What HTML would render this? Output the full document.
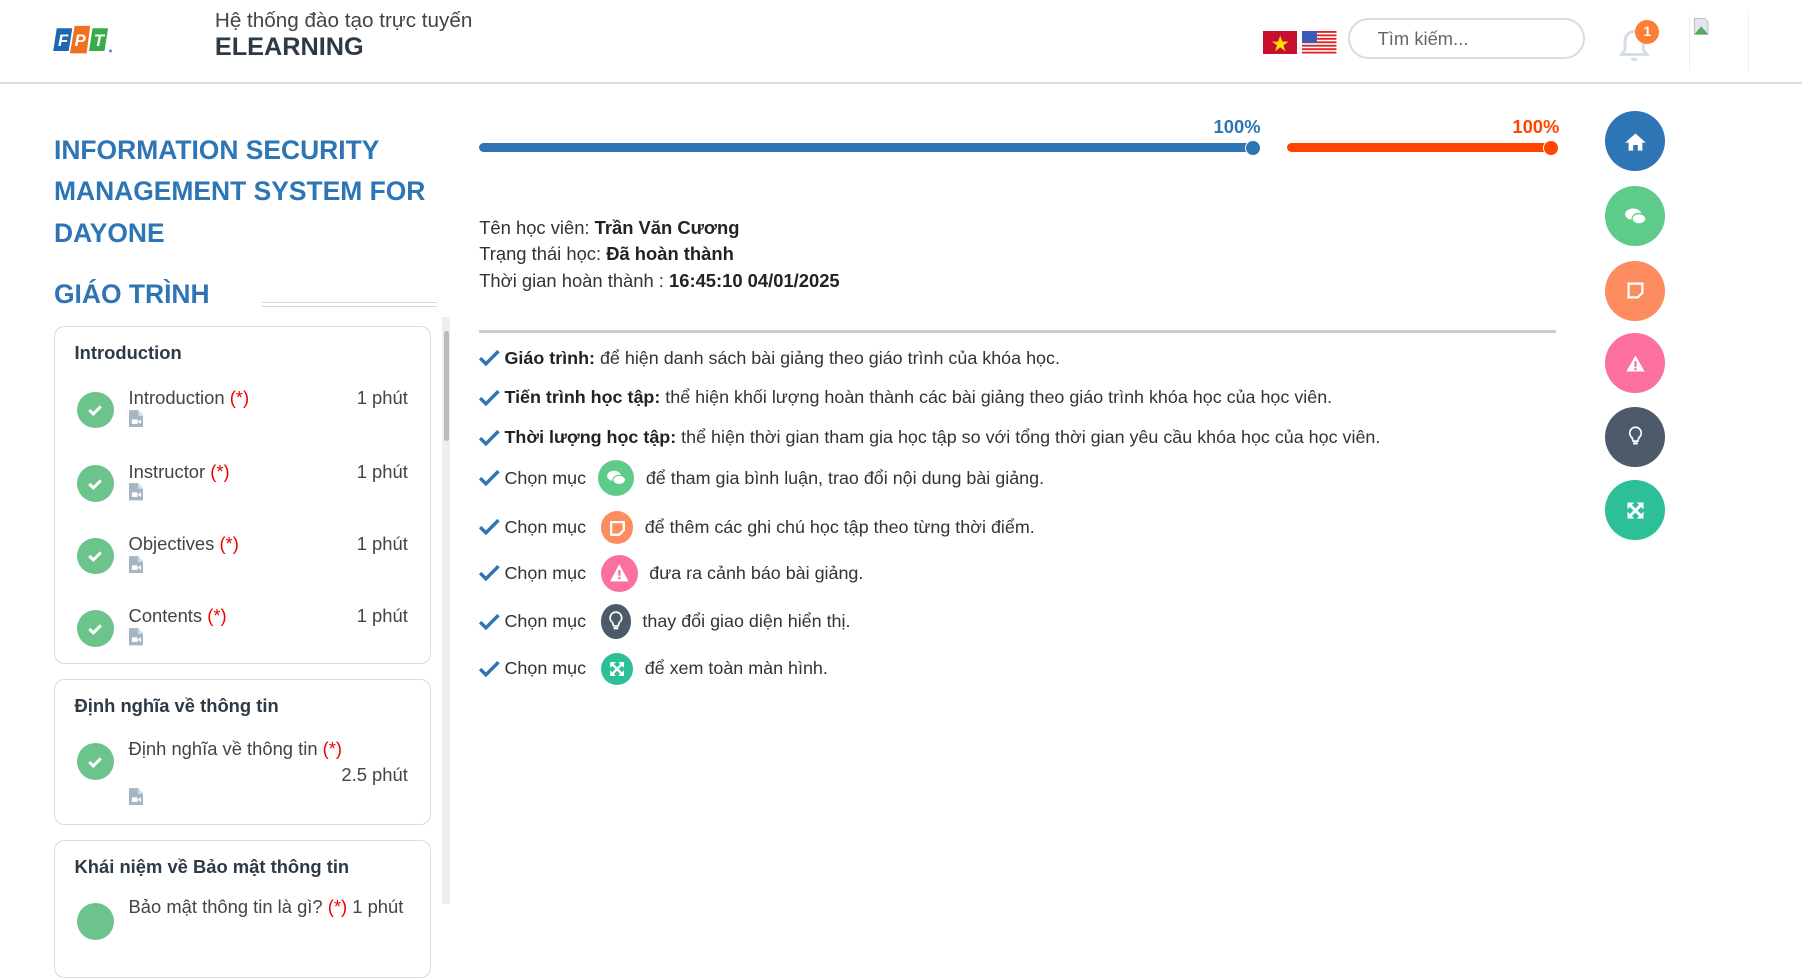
<!DOCTYPE html>
<html><head><meta charset="utf-8">
<style>
html{zoom:1.1492}
*{box-sizing:border-box;margin:0;padding:0}
body{width:1568px;height:787px;overflow:hidden;background:#fff;font-family:"Liberation Sans","DejaVu Sans",sans-serif;color:#333;position:relative}
.abs{position:absolute}
.hdr{left:0;top:0;width:1568px;height:73px;border-bottom:2px solid #d3dde5;background:#fff}
.t1{left:187px;top:8px;font-size:18px;color:#444}
.t2{left:187px;top:29px;font-size:22px;font-weight:bold;color:#2d3a46}
.search{left:1173px;top:16px;width:206px;height:35px;border:2px solid #d3dde5;border-radius:18px;font-size:16px;color:#666;padding:7px 0 0 24px}
.badge{left:1423px;top:17px;width:21px;height:21px;border-radius:50%;background:#fd7e34;color:#fff;font-size:12px;font-weight:bold;text-align:center;line-height:21px}
.title{left:47px;top:113px;font-size:23px;line-height:36px;font-weight:bold;color:#2e75b6;width:340px}
.gt{left:47px;top:243px;font-size:23px;font-weight:bold;color:#2e75b6}
.card{left:47px;width:328px;border:1px solid #d3dde5;border-radius:9px;background:#fff}
.ch{position:absolute;left:17px;top:13px;font-size:16px;font-weight:bold;color:#2d3a46}
.it{position:absolute;left:0;width:328px;height:50px}
.ck{position:absolute;left:19px;top:4px;width:32px;height:32px;border-radius:50%;background:#6cc48c}
.ck svg{position:absolute;left:9px;top:10px}
.nm{position:absolute;left:64px;top:0;font-size:16px;color:#444}
.nm b{color:#e00;font-weight:normal}
.tm{position:absolute;right:21px;top:0;font-size:16px;color:#444}
.fi{position:absolute;left:64px;top:19px}
.sb{left:385px;top:276px;width:7px;height:511px;background:#eee}
.th{left:386px;top:288px;width:5px;height:96px;background:#bbb;border-radius:3px}
.info{left:417px;top:187px;font-size:16px;line-height:23px;color:#333}
.info b{color:#222}
.li{left:417px;font-size:15.6px;color:#333;height:30px;display:flex;align-items:center;white-space:nowrap}
.li b{color:#222}
.li .c{display:inline-block;width:28px;height:28px;border-radius:50%;margin:0 10px;position:relative}
.rb{left:1397px;width:52px;height:52px;border-radius:50%}
.rb svg{position:absolute;left:16px;top:16px}
</style></head><body>
<div class="abs hdr"></div>
<svg class="abs" style="left:45px;top:20px" width="54" height="30" viewBox="0 0 52 28">
<path d="M4 4h13l-3 19H1z" fill="#1d68b4"/><path d="M19 2h13l-3 23H15z" fill="#f26f21"/><path d="M34 4h13l-3 19H31z" fill="#3aab49"/>
<text x="5" y="19" font-size="14" font-weight="bold" fill="#fff" font-style="italic" font-family="Liberation Sans">F</text>
<text x="19" y="19" font-size="14" font-weight="bold" fill="#fff" font-style="italic" font-family="Liberation Sans">P</text>
<text x="35" y="19" font-size="14" font-weight="bold" fill="#fff" font-style="italic" font-family="Liberation Sans">T</text>
<circle cx="49" cy="23" r="1.3" fill="#6b8fc7"/></svg>
<div class="abs t1">Hệ thống đào tạo trực tuyến</div>
<div class="abs t2">ELEARNING</div>
<svg class="abs" style="left:1099px;top:27px" width="30" height="20"><rect width="30" height="20" fill="#c8102e"/><path d="M15 4l1.8 5.2h5.4l-4.4 3.2 1.7 5.2-4.5-3.3-4.5 3.3 1.7-5.2-4.4-3.2h5.4z" fill="#ffde00"/></svg>
<svg class="abs" style="left:1133px;top:27px" width="30" height="20"><rect width="30" height="20" fill="#fff"/><g fill="#d22"><rect y="0" width="30" height="1.6"/><rect y="3" width="30" height="1.6"/><rect y="6" width="30" height="1.6"/><rect y="9" width="30" height="1.6"/><rect y="12" width="30" height="1.6"/><rect y="15" width="30" height="1.6"/><rect y="18" width="30" height="1.6"/></g><rect width="13" height="10.5" fill="#3c5bb5"/></svg>
<div class="abs search">Tìm kiếm...</div>
<svg class="abs" style="left:1407px;top:24px" width="30" height="32" viewBox="0 0 30 32"><path d="M15 3c-5 0-8 4-8 9v7l-3 4h22l-3-4v-7c0-5-3-9-8-9z" fill="none" stroke="#d3dde5" stroke-width="2.5"/><path d="M12 26a3 3 0 006 0z" fill="#d3dde5"/></svg>
<div class="abs badge">1</div>
<div class="abs" style="left:1470px;top:12px;width:52px;height:50px;border:1px solid #eee;border-top:none;border-bottom:none"></div>
<svg class="abs" style="left:1472px;top:14px" width="16" height="18"><path d="M2 2h9l3 3v11H2z" fill="#dfe6ee" stroke="#aab" stroke-width=".6"/><path d="M2 16l6-7 6 7z" fill="#5a5"/></svg>

<div class="abs title">INFORMATION SECURITY MANAGEMENT SYSTEM FOR DAYONE</div>
<div class="abs gt">GIÁO TRÌNH</div>
<div class="abs" style="left:228px;top:263px;width:152px;height:4px;border-top:1px solid #cfd8e0;border-bottom:1px solid #cfd8e0"></div>

<div class="abs card" style="top:284px;height:294px">
<div class="ch">Introduction</div>
<div class="it" style="top:52px"><div class="ck"><svg width="14" height="12"><path d="M2 6l3.5 3.5L12 3" stroke="#fff" stroke-width="2.6" fill="none"/></svg></div><div class="nm">Introduction <b>(*)</b></div><div class="tm">1 phút</div><svg class="fi" width="13" height="16"><path d="M0 1h8l5 5v10H0z" fill="#a6b4c4"/><path d="M8 1v5h5z" fill="#d6dee6"/><rect x="2.5" y="9" width="5" height="4" fill="#fff"/><path d="M7.5 11l3-2v4z" fill="#fff"/></svg></div>
<div class="it" style="top:116px"><div class="ck"><svg width="14" height="12"><path d="M2 6l3.5 3.5L12 3" stroke="#fff" stroke-width="2.6" fill="none"/></svg></div><div class="nm">Instructor <b>(*)</b></div><div class="tm">1 phút</div><svg class="fi" width="13" height="16"><path d="M0 1h8l5 5v10H0z" fill="#a6b4c4"/><path d="M8 1v5h5z" fill="#d6dee6"/><rect x="2.5" y="9" width="5" height="4" fill="#fff"/><path d="M7.5 11l3-2v4z" fill="#fff"/></svg></div>
<div class="it" style="top:179px"><div class="ck"><svg width="14" height="12"><path d="M2 6l3.5 3.5L12 3" stroke="#fff" stroke-width="2.6" fill="none"/></svg></div><div class="nm">Objectives <b>(*)</b></div><div class="tm">1 phút</div><svg class="fi" width="13" height="16"><path d="M0 1h8l5 5v10H0z" fill="#a6b4c4"/><path d="M8 1v5h5z" fill="#d6dee6"/><rect x="2.5" y="9" width="5" height="4" fill="#fff"/><path d="M7.5 11l3-2v4z" fill="#fff"/></svg></div>
<div class="it" style="top:242px"><div class="ck"><svg width="14" height="12"><path d="M2 6l3.5 3.5L12 3" stroke="#fff" stroke-width="2.6" fill="none"/></svg></div><div class="nm">Contents <b>(*)</b></div><div class="tm">1 phút</div><svg class="fi" width="13" height="16"><path d="M0 1h8l5 5v10H0z" fill="#a6b4c4"/><path d="M8 1v5h5z" fill="#d6dee6"/><rect x="2.5" y="9" width="5" height="4" fill="#fff"/><path d="M7.5 11l3-2v4z" fill="#fff"/></svg></div>
</div>
<div class="abs card" style="top:591px;height:127px">
<div class="ch">Định nghĩa về thông tin</div>
<div class="it" style="top:50px;height:70px"><div class="ck" style="top:5px"><svg width="14" height="12"><path d="M2 6l3.5 3.5L12 3" stroke="#fff" stroke-width="2.6" fill="none"/></svg></div><div class="nm">Định nghĩa về thông tin <b>(*)</b></div><div class="tm" style="top:23px">2.5 phút</div><svg class="fi" style="top:43px" width="13" height="16"><path d="M0 1h8l5 5v10H0z" fill="#a6b4c4"/><path d="M8 1v5h5z" fill="#d6dee6"/><rect x="2.5" y="9" width="5" height="4" fill="#fff"/><path d="M7.5 11l3-2v4z" fill="#fff"/></svg></div>
</div>
<div class="abs card" style="top:731px;height:120px">
<div class="ch">Khái niệm về Bảo mật thông tin</div>
<div class="it" style="top:48px"><div class="ck" style="top:6px"></div><div class="nm">Bảo mật thông tin là gì? <b>(*)</b> 1 phút</div></div>
</div>
<div class="abs sb"></div><div class="abs th"></div>

<!-- progress -->
<div class="abs" style="left:1056px;top:101px;font-size:16px;font-weight:bold;color:#2e75b6">100%</div>
<div class="abs" style="left:417px;top:124px;width:673px;height:8px;border-radius:4px;background:#2e75b6"></div>
<div class="abs" style="left:1083px;top:122px;width:14px;height:14px;border-radius:50%;background:#2e75b6;border:1px solid #fff"></div>
<div class="abs" style="left:1316px;top:101px;font-size:16px;font-weight:bold;color:#ff4500">100%</div>
<div class="abs" style="left:1120px;top:124px;width:230px;height:8px;border-radius:4px;background:#ff4500"></div>
<div class="abs" style="left:1343px;top:122px;width:14px;height:14px;border-radius:50%;background:#ff4500;border:1px solid #fff"></div>

<div class="abs info">Tên học viên: <b>Trần Văn Cương</b><br>Trạng thái học: <b>Đã hoàn thành</b><br>Thời gian hoàn thành : <b>16:45:10 04/01/2025</b></div>
<div class="abs" style="left:417px;top:287px;width:937px;height:3px;background:#ccc"></div>

<div class="abs li" style="top:297px"><svg width="18" height="14" style="margin-right:4px"><path d="M1 7l5 5L17 1" stroke="#2e75b6" stroke-width="3" fill="none"/></svg><b>Giáo trình:</b>&nbsp;để hiện danh sách bài giảng theo giáo trình của khóa học.</div>
<div class="abs li" style="top:331px"><svg width="18" height="14" style="margin-right:4px"><path d="M1 7l5 5L17 1" stroke="#2e75b6" stroke-width="3" fill="none"/></svg><b>Tiến trình học tập:</b>&nbsp;thể hiện khối lượng hoàn thành các bài giảng theo giáo trình khóa học của học viên.</div>
<div class="abs li" style="top:366px"><svg width="18" height="14" style="margin-right:4px"><path d="M1 7l5 5L17 1" stroke="#2e75b6" stroke-width="3" fill="none"/></svg><b>Thời lượng học tập:</b>&nbsp;thể hiện thời gian tham gia học tập so với tổng thời gian yêu cầu khóa học của học viên.</div>
<div class="abs li" style="top:401px"><svg width="18" height="14" style="margin-right:4px"><path d="M1 7l5 5L17 1" stroke="#2e75b6" stroke-width="3" fill="none"/></svg>Chọn mục<span class="c" style="background:#5fcb8b;width:32px;height:32px"><svg style="position:absolute;left:7px;top:8px" width="18" height="16"><ellipse cx="7" cy="6" rx="6" ry="4.5" fill="#fff"/><ellipse cx="11.5" cy="9.5" rx="5.5" ry="4" fill="#fff" stroke="#5fcb8b" stroke-width="1"/></svg></span>để tham gia bình luận, trao đổi nội dung bài giảng.</div>
<div class="abs li" style="top:444px"><svg width="18" height="14" style="margin-right:4px"><path d="M1 7l5 5L17 1" stroke="#2e75b6" stroke-width="3" fill="none"/></svg>Chọn mục<span class="c" style="background:#fd8c5f;margin-left:13px"><svg style="position:absolute;left:8px;top:8px" width="13" height="13"><path d="M1 1h11v7l-4 4H1z" fill="none" stroke="#fff" stroke-width="2"/></svg></span>để thêm các ghi chú học tập theo từng thời điểm.</div>
<div class="abs li" style="top:484px"><svg width="18" height="14" style="margin-right:4px"><path d="M1 7l5 5L17 1" stroke="#2e75b6" stroke-width="3" fill="none"/></svg>Chọn mục<span class="c" style="background:#fc709d;width:32px;height:32px;margin-left:13px"><svg style="position:absolute;left:7px;top:7px" width="18" height="17"><path d="M9 1l8 15H1z" fill="#fff"/><rect x="8" y="6" width="2" height="5" fill="#fc709d"/><rect x="8" y="12" width="2" height="2" fill="#fc709d"/></svg></span>đưa ra cảnh báo bài giảng.</div>
<div class="abs li" style="top:526px"><svg width="18" height="14" style="margin-right:4px"><path d="M1 7l5 5L17 1" stroke="#2e75b6" stroke-width="3" fill="none"/></svg>Chọn mục<span class="c" style="background:#4d5a6a;width:26px;height:30px;margin-left:13px"><svg style="position:absolute;left:7px;top:6px" width="12" height="18"><path d="M6 1a5 5 0 00-3 9l1 3h4l1-3a5 5 0 00-3-9z" fill="none" stroke="#fff" stroke-width="1.5"/><rect x="4" y="14" width="4" height="2" fill="#fff"/></svg></span>thay đổi giao diện hiển thị.</div>
<div class="abs li" style="top:567px"><svg width="18" height="14" style="margin-right:4px"><path d="M1 7l5 5L17 1" stroke="#2e75b6" stroke-width="3" fill="none"/></svg>Chọn mục<span class="c" style="background:#2dbf97;margin-left:13px"><svg style="position:absolute;left:7px;top:7px" width="14" height="14"><path d="M1 1h5L1 6zM13 1H8l5 5zM1 13h5L1 8zM13 13H8l5-5z" fill="#fff"/><path d="M2 2l10 10M12 2L2 12" stroke="#fff" stroke-width="2"/></svg></span>để xem toàn màn hình.</div>

<!-- right buttons -->
<div class="abs rb" style="top:97px;background:#2e75b6"><svg width="20" height="20"><path d="M10 3L1 11h3v7h4v-5h4v5h4v-7h3z" fill="#fff"/></svg></div>
<div class="abs rb" style="top:162px;background:#5fcb8b"><svg width="20" height="20"><ellipse cx="8" cy="8" rx="7" ry="5" fill="#fff"/><ellipse cx="13" cy="12" rx="6" ry="4.5" fill="#fff" stroke="#5fcb8b" stroke-width="1.2"/></svg></div>
<div class="abs rb" style="top:227px;background:#fd8c5f"><svg width="20" height="20"><path d="M4 4h12v8l-4 4H4z" fill="none" stroke="#fff" stroke-width="2"/></svg></div>
<div class="abs rb" style="top:290px;background:#fc709d"><svg width="20" height="20"><path d="M10 3l8 14H2z" fill="#fff"/><rect x="9" y="8" width="2" height="5" fill="#fc709d"/><rect x="9" y="14" width="2" height="2" fill="#fc709d"/></svg></div>
<div class="abs rb" style="top:354px;background:#4d5a6a"><svg width="20" height="20"><path d="M10 2a5 5 0 00-3 9l1 3h4l1-3a5 5 0 00-3-9z" fill="none" stroke="#fff" stroke-width="1.5"/><rect x="8" y="15" width="4" height="2" fill="#fff"/></svg></div>
<div class="abs rb" style="top:418px;background:#2dbf97"><svg width="20" height="20"><path d="M3 3h6L3 9zM17 3h-6l6 6zM3 17h6l-6-6zM17 17h-6l6-6z" fill="#fff"/><path d="M4 4l12 12M16 4L4 16" stroke="#fff" stroke-width="2.5"/></svg></div>
</body></html>
